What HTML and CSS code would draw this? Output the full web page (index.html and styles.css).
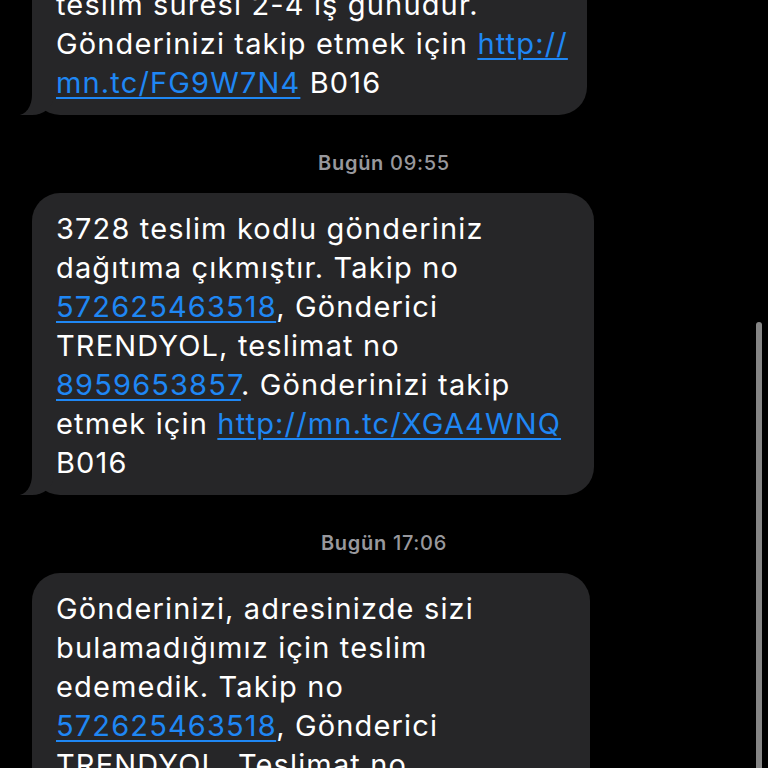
FILE: index.html
```html
<!DOCTYPE html>
<html lang="tr">
<head>
    <meta charset="UTF-8">
    <meta name="viewport" content="width=device-width, initial-scale=1.0">
    <title>Mesajlar</title>
    <link rel="stylesheet" href="styles.css">
</head>
<body>
    <div class="thread">
        <div class="bubble bubble-first">
            teslim süresi 2-4 iş günüdür.<br>
            Gönderinizi takip etmek için <a href="#">http://<br>mn.tc/FG9W7N4</a> B016
        </div>

        <div class="stamp"><b>Bugün</b> 09:55</div>

        <div class="bubble bubble-wide">
            3728 teslim kodlu gönderiniz<br>
            dağıtıma çıkmıştır. Takip no<br>
            <a href="#">572625463518</a>, Gönderici<br>
            TRENDYOL, teslimat no<br>
            <a href="#">8959653857</a>. Gönderinizi takip<br>
            etmek için <a href="#">http://mn.tc/XGA4WNQ</a><br>
            B016
        </div>

        <div class="stamp"><b>Bugün</b> 17:06</div>

        <div class="bubble bubble-last">
            Gönderinizi, adresinizde sizi<br>
            bulamadığımız için teslim<br>
            edemedik. Takip no<br>
            <a href="#">572625463518</a>, Gönderici<br>
            TRENDYOL, Teslimat no<br>
            <a href="#">8959653857</a>. Gönderinizi takip<br>
            etmek için <a href="#">http://mn.tc/XGA4WNQ</a><br>
            B016
        </div>
    </div>
    <div class="scrollbar"></div>
</body>
</html>
```

FILE: styles.css
```css
html, body {
    margin: 0;
    height: 100%;
    overflow: hidden;
    background: #000;
}
body {
    font-family: Inter, "Liberation Sans", Arial, sans-serif;
    color: #fff;
}
.thread {
    display: flex;
    flex-direction: column;
    align-items: flex-start;
    padding-left: 32px;
}
.bubble {
    position: relative;
    box-sizing: border-box;
    background: #262628;
    border-radius: 28px;
    padding: 16px 24px 13px;
    font-size: 29px;
    line-height: 39px;
    letter-spacing: 1.15px;
    white-space: nowrap;
}
.bubble a {
    color: #1f87f4;
    text-decoration: underline;
    text-decoration-thickness: 2px;
    text-underline-offset: 4px;
}
/* kuyruk */
.bubble::before {
    content: "";
    position: absolute;
    left: -12px;
    bottom: 0;
    width: 34px;
    height: 34px;
    background: #262628;
    border-bottom-right-radius: 22px 20px;
}
.bubble::after {
    content: "";
    position: absolute;
    left: -34px;
    bottom: 0;
    width: 34px;
    height: 36px;
    background: #000;
    border-bottom-right-radius: 14px 20px;
}
.bubble-first {
    width: 555px;
    margin-top: -31px;
}
.bubble-wide {
    width: 562px;
}
.bubble-last {
    width: 558px;
}
.stamp {
    align-self: stretch;
    margin: 36px 0 18px -32px;
    height: 24px;
    line-height: 24px;
    text-align: center;
    font-size: 20px;
    font-weight: 500;
    letter-spacing: 0.7px;
    color: #98989d;
}
.stamp b {
    font-weight: 600;
}
.scrollbar {
    position: fixed;
    top: 322px;
    right: 6px;
    width: 6px;
    height: 460px;
    border-radius: 3px;
    background: #858585;
}
```
